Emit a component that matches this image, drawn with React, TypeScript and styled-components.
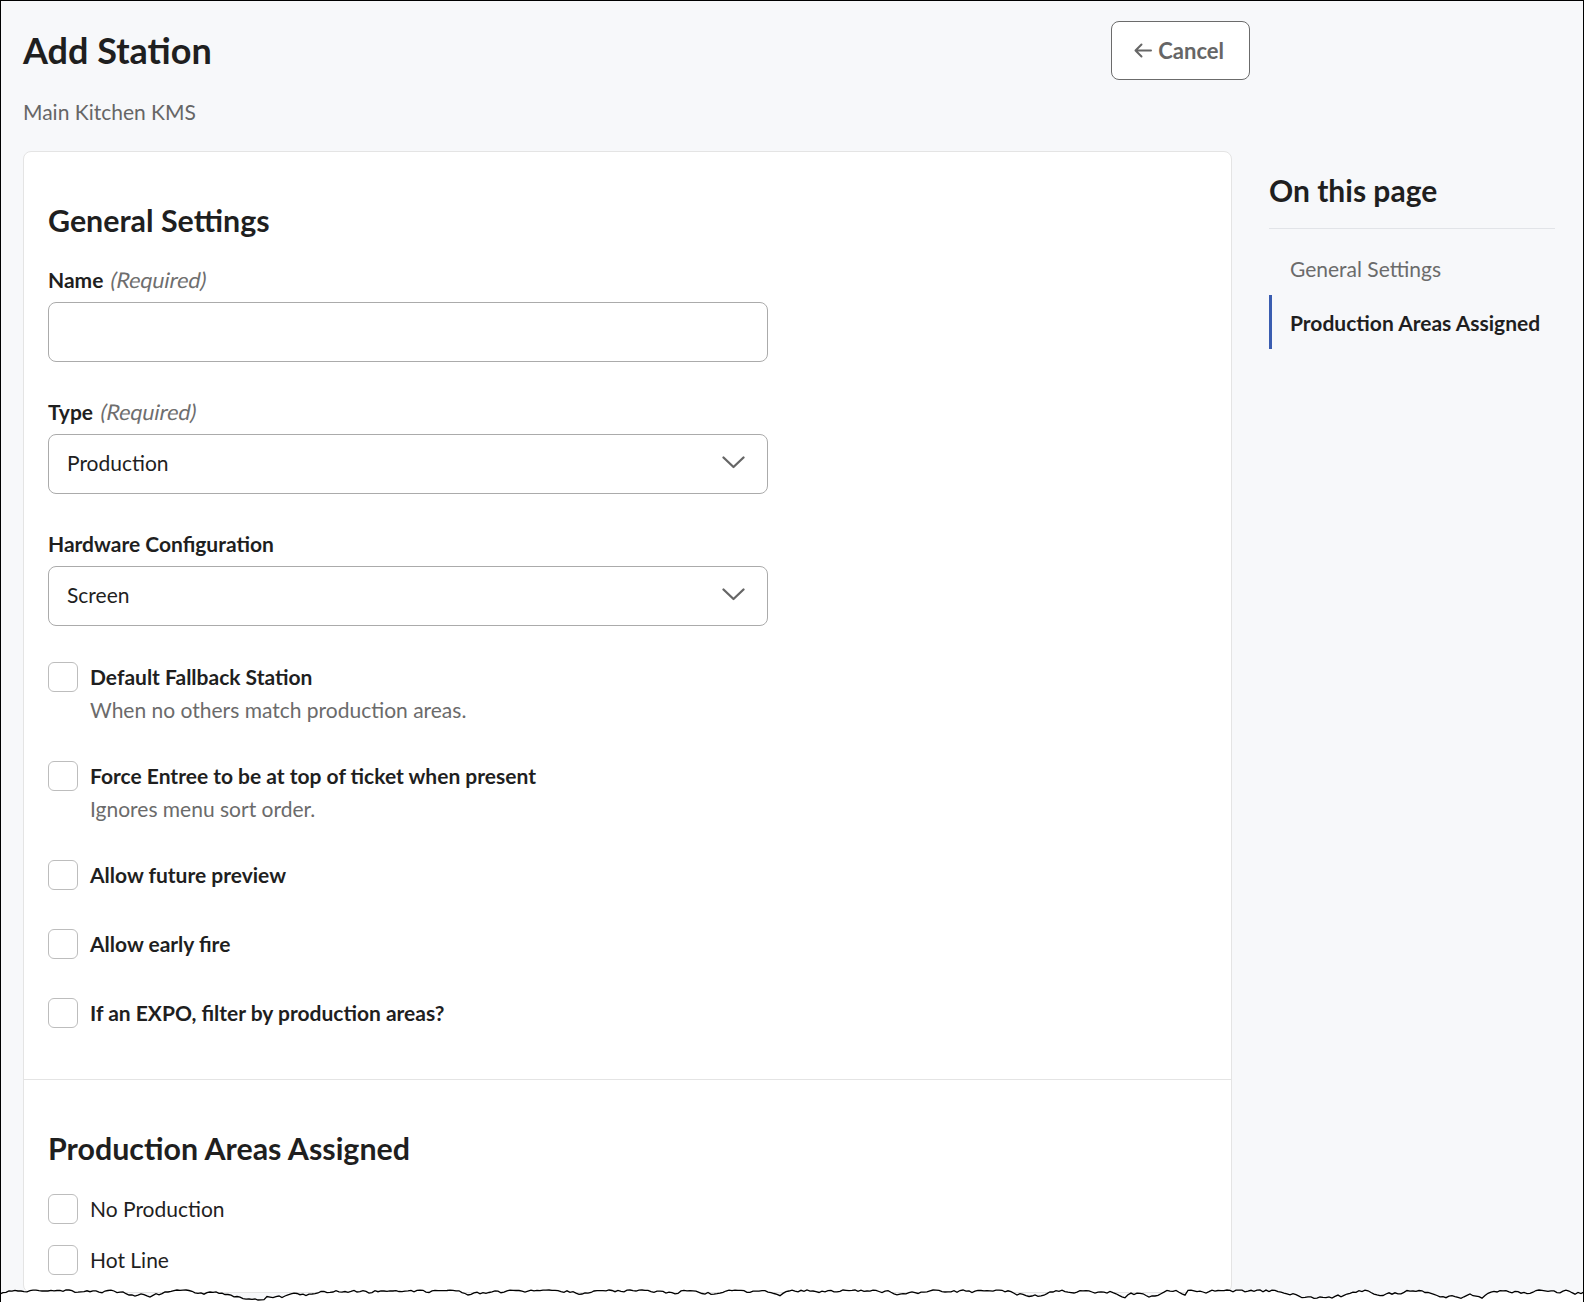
import React from "react";
import styled, { createGlobalStyle } from "styled-components";

const GlobalStyle = createGlobalStyle`
  html, body {
    margin: 0;
    padding: 0;
    background: #ffffff;
  }
  * { box-sizing: border-box; }
  body {
    font-family: Lato, "Noto Sans", "Liberation Sans", sans-serif;
    color: #1f1f1f;
  }
`;

const Frame = styled.div`
  position: relative;
  width: 1584px;
  height: 1302px;
  overflow: hidden;
  background: #f7f8fa;
  border: 1px solid #000;
  border-bottom: none;
`;

const Content = styled.div`
  padding: 20px 0 0 22px;
`;

const Header = styled.header`
  width: 1227px;
  display: flex;
  align-items: center;
  justify-content: space-between;
`;

const Title = styled.h1`
  margin: 0;
  font-size: 36px;
  line-height: 43px;
  font-weight: 700;
  color: #1f1f1f;
`;

const CancelButton = styled.button`
  height: 59px;
  padding: 0 25px 0 22px;
  display: flex;
  align-items: center;
  gap: 6px;
  background: #ffffff;
  border: 1px solid #6b6b6b;
  border-radius: 8px;
  font-family: inherit;
  font-size: 22px;
  font-weight: 700;
  color: #666666;
  cursor: pointer;
`;

const Subtitle = styled.p`
  margin: 20px 0 0;
  font-size: 21px;
  line-height: 24px;
  color: #666666;
`;

const Body = styled.div`
  margin-top: 27px;
  display: grid;
  grid-template-columns: 1209px 286px;
  column-gap: 37px;
  align-items: start;
`;

const Card = styled.main`
  background: #ffffff;
  border: 1px solid #e4e4e4;
  border-radius: 8px;
`;

const Section = styled.section<{ $divided?: boolean; $bottom: number }>`
  padding: 50px 24px ${(p) => p.$bottom}px;
  border-top: ${(p) => (p.$divided ? "1px solid #e4e4e4" : "none")};
`;

const SectionTitle = styled.h2<{ $mb: number }>`
  margin: 0 0 ${(p) => p.$mb}px;
  font-size: 30.4px;
  line-height: 36px;
  font-weight: 700;
  color: #1f1f1f;
`;

const Stack = styled.div<{ $gap: number }>`
  display: flex;
  flex-direction: column;
  gap: ${(p) => p.$gap}px;
`;

const Field = styled.div`
  display: flex;
  flex-direction: column;
  gap: 10px;
  width: 720px;
`;

const Label = styled.label`
  font-size: 21px;
  line-height: 24px;
  font-weight: 700;
  color: #1f1f1f;
`;

const Hint = styled.span`
  display: inline-block;
  margin-left: 8px;
  font-size: 21.5px;
  font-weight: 400;
  color: #6e6e6e;
  transform: skewX(-11deg);
`;

const TextInput = styled.input`
  height: 60px;
  width: 100%;
  padding: 0 19px;
  border: 1px solid #ababab;
  border-radius: 8px;
  font-family: inherit;
  font-size: 21px;
  color: #1f1f1f;
  background: #ffffff;
  outline: none;
`;

const SelectBox = styled.div`
  height: 60px;
  display: flex;
  align-items: center;
  justify-content: space-between;
  padding: 0 22px 3px 18px;
  border: 1px solid #ababab;
  border-radius: 8px;
  background: #ffffff;
  font-size: 21px;
  color: #1f1f1f;
`;

const CheckRow = styled.div`
  display: grid;
  grid-template-columns: 30px 1fr;
  column-gap: 12px;
  align-items: start;
`;

const Box = styled.span`
  width: 30px;
  height: 30px;
  border: 1px solid #bdbdbd;
  border-radius: 6px;
  background: #ffffff;
`;

const CheckText = styled.div`
  padding-top: 3px;
  display: flex;
  flex-direction: column;
  gap: 9px;
`;

const CheckLabel = styled.span<{ $bold?: boolean }>`
  font-size: 21px;
  line-height: 24px;
  font-weight: ${(p) => (p.$bold ? 700 : 400)};
  color: #1f1f1f;
`;

const CheckDesc = styled.span`
  font-size: 21px;
  line-height: 24px;
  color: #6b6b6b;
`;

const Aside = styled.aside`
  padding-top: 21px;
`;

const AsideTitle = styled.h2`
  margin: 0;
  font-size: 30px;
  line-height: 36px;
  font-weight: 700;
  color: #1f1f1f;
  padding-bottom: 20px;
  border-bottom: 1px solid #e2e4e8;
`;

const NavList = styled.nav`
  margin-top: 12px;
  display: flex;
  flex-direction: column;
`;

const NavItem = styled.a<{ $active?: boolean }>`
  height: 54px;
  display: flex;
  align-items: center;
  padding-left: 18px;
  border-left: 3px solid ${(p) => (p.$active ? "#3a5db0" : "transparent")};
  font-size: 21px;
  font-weight: ${(p) => (p.$active ? 700 : 400)};
  color: ${(p) => (p.$active ? "#1f1f1f" : "#6b6b6b")};
  text-decoration: none;
`;

const TornEdge = styled.svg`
  position: absolute;
  left: -1px;
  bottom: 0;
  display: block;
`;

const Chevron = () => (
  <svg width="23" height="13" viewBox="0 0 23 13" fill="none">
    <polyline
      points="1.5,1.5 11.5,11 21.5,1.5"
      stroke="#666"
      strokeWidth="2.3"
      strokeLinecap="round"
      strokeLinejoin="round"
    />
  </svg>
);

const ArrowLeft = () => (
  <svg width="18" height="15" viewBox="0 0 18 15" fill="none">
    <path
      d="M17 7.5H1.5M7.5 1.5L1.5 7.5L7.5 13.5"
      stroke="#666"
      strokeWidth="2"
      strokeLinecap="round"
      strokeLinejoin="round"
    />
  </svg>
);

function buildTorn(width: number): string {
  let seed = 7;
  const rnd = () => {
    seed = (seed * 9301 + 49297) % 233280;
    return seed / 233280;
  };
  let y = 16;
  const pts: string[] = [];
  for (let x = 0; x <= width; x += 3) {
    y += (rnd() - 0.5) * 3.6;
    if (rnd() > 0.92) y -= 3;
    if (y < 12) y = 12 + rnd();
    if (y > 22) y = 22 - rnd();
    pts.push(`${x},${y.toFixed(1)}`);
  }
  return pts.join(" ");
}

const generalChecks = [
  { label: "Default Fallback Station", desc: "When no others match production areas." },
  { label: "Force Entree to be at top of ticket when present", desc: "Ignores menu sort order." },
  { label: "Allow future preview" },
  { label: "Allow early fire" },
  { label: "If an EXPO, filter by production areas?" },
];

const areas = ["No Production", "Hot Line"];

export default function App() {
  const W = 1586;
  const line = buildTorn(W);
  const fill = `0,24 ${line} ${W},24`;
  return (
    <>
      <GlobalStyle />
      <Frame>
        <Content>
          <Header>
            <Title>Add Station</Title>
            <CancelButton>
              <ArrowLeft />
              Cancel
            </CancelButton>
          </Header>
          <Subtitle>Main Kitchen KMS</Subtitle>
          <Body>
            <Card>
              <Section $bottom={51}>
                <SectionTitle $mb={30}>General Settings</SectionTitle>
                <Stack $gap={36}>
                  <Stack $gap={38}>
                    <Field>
                      <Label>
                        Name<Hint>(Required)</Hint>
                      </Label>
                      <TextInput />
                    </Field>
                    <Field>
                      <Label>
                        Type<Hint>(Required)</Hint>
                      </Label>
                      <SelectBox>
                        Production
                        <Chevron />
                      </SelectBox>
                    </Field>
                    <Field>
                      <Label>Hardware Configuration</Label>
                      <SelectBox>
                        Screen
                        <Chevron />
                      </SelectBox>
                    </Field>
                  </Stack>
                  <Stack $gap={39}>
                    {generalChecks.map((c) => (
                      <CheckRow key={c.label}>
                        <Box />
                        <CheckText>
                          <CheckLabel $bold>{c.label}</CheckLabel>
                          {c.desc && <CheckDesc>{c.desc}</CheckDesc>}
                        </CheckText>
                      </CheckRow>
                    ))}
                  </Stack>
                </Stack>
              </Section>
              <Section $divided $bottom={17}>
                <SectionTitle $mb={28}>Production Areas Assigned</SectionTitle>
                <Stack $gap={21}>
                  {areas.map((a) => (
                    <CheckRow key={a}>
                      <Box />
                      <CheckText>
                        <CheckLabel>{a}</CheckLabel>
                      </CheckText>
                    </CheckRow>
                  ))}
                </Stack>
              </Section>
            </Card>
            <Aside>
              <AsideTitle>On this page</AsideTitle>
              <NavList>
                <NavItem href="#general">General Settings</NavItem>
                <NavItem $active href="#areas">
                  Production Areas Assigned
                </NavItem>
              </NavList>
            </Aside>
          </Body>
        </Content>
        <TornEdge width={W} height={24} viewBox={`0 0 ${W} 24`}>
          <polygon points={fill} fill="#ffffff" />
          <polyline points={line} fill="none" stroke="#000" strokeWidth="1.3" />
        </TornEdge>
      </Frame>
    </>
  );
}
